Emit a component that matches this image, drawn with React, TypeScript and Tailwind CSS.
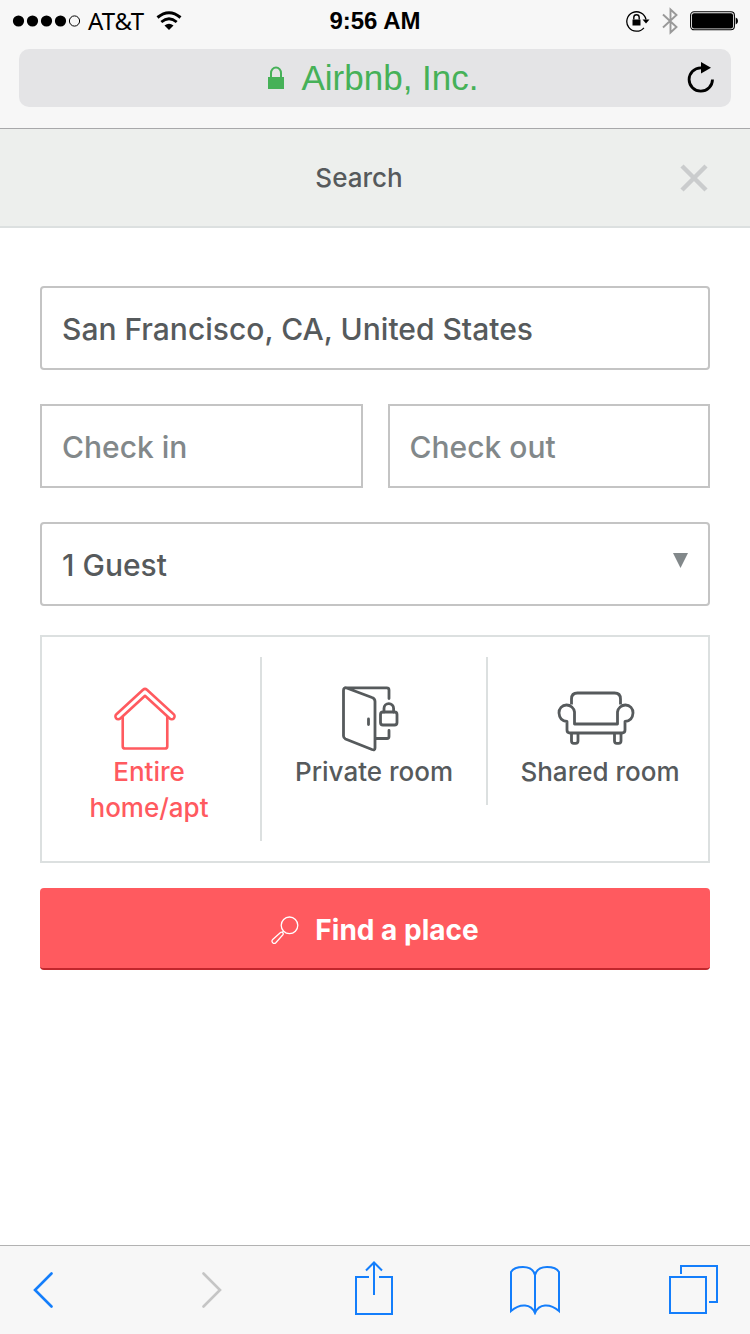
import { useState, type ReactNode } from 'react'

function StatusBar() {
  return (
    <div className="grid h-10 grid-cols-3 items-center px-3 pt-px text-black">
      <div className="flex items-center">
        <svg width="70" height="12" viewBox="0 0 70 12" aria-hidden="true">
          <circle cx="6.5" cy="6" r="5.6" />
          <circle cx="20.5" cy="6" r="5.6" />
          <circle cx="34.5" cy="6" r="5.6" />
          <circle cx="48.5" cy="6" r="5.6" />
          <circle cx="62.5" cy="6" r="5.1" fill="none" stroke="black" strokeWidth="1" />
        </svg>
        <span className="ml-1.5 font-['Noto_Sans',sans-serif] text-2xl leading-8">AT&amp;T</span>
        <svg className="ml-3" width="26" height="20" viewBox="0 0 26 20" aria-hidden="true">
          <path d="M1.5 6.5Q13 -3 24.5 6.5" fill="none" stroke="black" strokeWidth="3" />
          <path d="M5.3 11Q13 4.5 20.7 11" fill="none" stroke="black" strokeWidth="2.8" />
          <path d="M8.5 14.5Q13 10.8 17.5 14.5L13 19Z" />
        </svg>
      </div>
      <span className="text-center text-2xl leading-8 font-bold">9:56 AM</span>
      <div className="flex items-center justify-end">
        <svg width="24" height="22" viewBox="0 0 24 22" fill="none" stroke="black" aria-hidden="true">
          <path d="M17.9 17.8A9.7 9.7 0 1 1 20 9.5" strokeWidth="1.3" />
          <path d="M16.5 9.5H23.5L20 13.5Z" fill="black" stroke="none" />
          <path d="M6.5 9.5H14.5V15.5H6.5Z" fill="black" stroke="none" />
          <path d="M7.8 9.5V7.5a2.7 2.7 0 0 1 5.4 0V9.5" strokeWidth="1.4" />
        </svg>
        <svg className="ml-3" width="16" height="28" viewBox="0 0 16 28" fill="none" stroke="#999" strokeWidth="1.9" aria-hidden="true">
          <path d="M1 7.5L14.5 20L8.5 25.5V2.5L14.5 8L1 20.5" />
        </svg>
        <svg className="ml-3" width="48" height="20" viewBox="0 0 48 20" aria-hidden="true">
          <rect x="0.6" y="0.8" width="43.8" height="18" rx="3.5" fill="none" stroke="black" strokeWidth="1.1" />
          <rect x="2" y="2.2" width="41" height="15.2" rx="2" />
          <path d="M45.7 6.5Q48 7 48 10T45.7 13.5Z" />
        </svg>
      </div>
    </div>
  )
}

function AddressBar() {
  return (
    <div className="mx-[19px] mt-[9px] mb-[21px] flex h-[58px] items-center rounded-[10px] bg-[#e4e4e6] pr-3">
      <button
        type="button"
        className="flex flex-1 items-center justify-center gap-4 pl-11 text-[35px] leading-10 text-[#46b158]"
      >
        <svg width="18" height="24" viewBox="0 0 18 24" aria-hidden="true">
          <path d="M1 11H17V23H1Z" fill="currentColor" />
          <path d="M4 11V7a5 5.5 0 0 1 10 0V11" fill="none" stroke="currentColor" strokeWidth="2" />
        </svg>
        Airbnb, Inc.
      </button>
      <button type="button" aria-label="Reload" className="flex w-9 justify-center">
        <svg width="30" height="32" viewBox="0 0 30 32" aria-hidden="true">
          <path d="M26.5 17.5A11.7 11.7 0 1 1 14.8 5.8H16" fill="none" stroke="black" strokeWidth="2.8" />
          <path d="M15 0L25 5.8L15 11.6Z" />
        </svg>
      </button>
    </div>
  )
}

function HouseIcon() {
  return (
    <svg width="62" height="64" viewBox="0 0 64 66" fill="none" stroke="currentColor" strokeWidth="2.7" strokeLinejoin="round" aria-hidden="true">
      <path d="M30 2.8Q32 1 34 2.8L61.5 28A3 3 0 0 1 57.5 32.5L32 9L6.5 32.5A3 3 0 0 1 2.5 28Z" />
      <path d="M9 31V61Q9 63.5 11.5 63.5H52.5Q55 63.5 55 61V31" />
    </svg>
  )
}

function DoorIcon() {
  return (
    <svg width="58" height="66" viewBox="0 0 58 66" fill="none" stroke="currentColor" strokeWidth="2.8" strokeLinecap="round" strokeLinejoin="round" aria-hidden="true">
      <path d="M48 12.5V4Q48 1.8 45.8 1.8H5L31 11.5Q34 12.5 34 15.5V62Q34 64.5 31 63.500L4.500 53Q2.500 52 2.500 50V4.500Q2.500 1.500 5.500 1.800" />
      <path d="M35 52.500H46Q48 52.500 48 50.500V44.500M27.500 33V38.500" />
      <rect x="39.500" y="26" width="16.500" height="13" rx="2.500" />
      <path d="M43 26V22.500a4.800 4.800 0 0 1 9.600 0V26" />
    </svg>
  )
}

function SofaIcon() {
  return (
    <svg width="78" height="56" viewBox="0 0 78 56" fill="none" stroke="currentColor" strokeWidth="2.8" strokeLinejoin="round" aria-hidden="true">
      <path d="M14.500 13.500V8Q14.500 2 20.500 2H57.500Q63.500 2 63.500 8V13.500" />
      <path d="M17.500 33V21A8 8 0 0 0 9.500 14A7.500 7.500 0 0 0 2 22Q2.500 30 10 30.500V39Q10 42 13 42H65Q68 42 68 39V30.500Q75.500 30 76 22A7.500 7.500 0 0 0 68.500 14A8 8 0 0 0 60.500 21V33Z" />
      <path d="M14.500 42V50Q14.500 52.300 16.800 52.300H18.500Q21 52.300 21 50V42M57.500 42V50Q57.500 52.300 59.800 52.300H61.500Q64 52.300 64 50V42" />
    </svg>
  )
}

type RoomTypeProps = {
  value: string
  icon: ReactNode
  label: string
  selected: string
  onSelect: (value: string) => void
  className?: string
}

function RoomType({ value, icon, label, selected, onSelect, className = '' }: RoomTypeProps) {
  return (
    <label
      className={`relative flex cursor-pointer flex-col items-center pb-[15px] text-center text-[26px] leading-9 ${className} ${
        selected === value ? 'text-[#ff5a5f]' : 'text-[#565a5c]'
      }`}
    >
      <input
        type="radio"
        name="room-type"
        value={value}
        checked={selected === value}
        onChange={() => onSelect(value)}
        className="sr-only"
      />
      <span className="flex h-[97px] items-center justify-center pt-[26px] pr-2">{icon}</span>
      <span className="px-5">{label}</span>
    </label>
  )
}

function SearchForm() {
  const [roomType, setRoomType] = useState('entire')

  return (
    <form className="flex flex-col px-10 pt-[58px] pb-10" onSubmit={(e) => e.preventDefault()}>
      <div className="flex flex-col gap-[34px] text-[30px] text-[#565a5c]">
        <input
          type="text"
          aria-label="Location"
          defaultValue="San Francisco, CA, United States"
          className="h-[84px] w-full rounded border-2 border-[#c4c4c4] bg-white px-5 pt-0.5"
        />
        <div className="grid grid-cols-2 gap-[25px]">
          <input
            type="text"
            aria-label="Check in"
            placeholder="Check in"
            className="h-[84px] w-full border-2 border-[#c4c4c4] bg-white px-5 pt-0.5 placeholder:text-[#82888a]"
          />
          <input
            type="text"
            aria-label="Check out"
            placeholder="Check out"
            className="h-[84px] w-full border-2 border-[#c4c4c4] bg-white px-5 pt-0.5 placeholder:text-[#82888a]"
          />
        </div>
        <div className="relative">
          <select
            aria-label="Guests"
            className="h-[84px] w-full appearance-none rounded border-2 border-[#c4c4c4] bg-white px-5 pt-0.5"
          >
            <option>1 Guest</option>
            <option>2 Guests</option>
            <option>3 Guests</option>
          </select>
          <svg className="pointer-events-none absolute top-[31px] right-[22px]" width="15" height="15" viewBox="0 0 15 15" aria-hidden="true">
            <path d="M0 0H15L7.5 15Z" fill="#82888a" />
          </svg>
        </div>
      </div>

      <fieldset
        aria-label="Room type"
        className="mt-[29px] grid grid-cols-[220fr_226fr_220fr] items-start border-2 border-[#dce0e0] py-5"
      >
        <RoomType
          value="entire"
          icon={<HouseIcon />}
          label="Entire home/apt"
          selected={roomType}
          onSelect={setRoomType}
          className="border-r-2 border-r-[#dce0e0] pr-1"
        />
        <RoomType
          value="private"
          icon={<DoorIcon />}
          label="Private room"
          selected={roomType}
          onSelect={setRoomType}
          className="border-r-2 border-r-[#dce0e0]"
        />
        <RoomType
          value="shared"
          icon={<SofaIcon />}
          label="Shared room"
          selected={roomType}
          onSelect={setRoomType}
          className="pl-1"
        />
      </fieldset>

      <button
        type="submit"
        className="mt-[25px] flex h-[82px] items-center justify-center gap-4 rounded border-b-2 border-[#c1272d] bg-[#ff5a5f] pt-1 text-[28px] font-bold text-white"
      >
        <svg width="28" height="28" viewBox="0 0 28 28" fill="none" stroke="currentColor" strokeWidth="1.3" aria-hidden="true">
          <circle cx="18.5" cy="9.3" r="8.3" />
          <path d="M12.5 15.2L10.8 16.8M9.8 16.3L1.7 23.4A2.3 2.3 0 0 0 4.8 26.8L12 18.7Q12.6 17.5 11.8 16.7T9.8 16.3Z" />
        </svg>
        Find a place
      </button>
    </form>
  )
}

function BrowserToolbar() {
  return (
    <nav className="mt-auto flex h-[89px] items-center justify-between border-t border-[#b2b2b2] bg-[#f7f7f7] pr-[31px] pl-8 text-[#147efb]">
      <button type="button" aria-label="Back" className="w-14">
        <svg width="22" height="36" viewBox="0 0 22 36" fill="none" stroke="currentColor" strokeWidth="2.6" strokeLinecap="round">
          <path d="M19.5 1.5L3 18L19.5 34.5" />
        </svg>
      </button>
      <button type="button" aria-label="Forward" disabled className="w-11 text-[#c5c5c5]">
        <svg width="24" height="36" viewBox="0 0 24 36" fill="none" stroke="currentColor" strokeWidth="2.6" strokeLinecap="round">
          <path d="M4.5 1.5L21 18L4.5 34.5" />
        </svg>
      </button>
      <button type="button" aria-label="Share" className="w-11">
        <svg width="40" height="58" viewBox="0 0 40 58" fill="none" stroke="currentColor" strokeWidth="2">
          <path d="M15 16H2V53H38V16H25M20 34V1.5M12 9.5L20 1.5L28 9.5" />
        </svg>
      </button>
      <button type="button" aria-label="Bookmarks" className="w-[50px]">
        <svg width="52" height="50" viewBox="0 0 52 50" fill="none" stroke="currentColor" strokeWidth="2">
          <path d="M27 48V10Q25 2 15 2Q6 2 3 7V46Q10 40 17 40.5Q24 41 27 48Q30 41 37 40.5Q44 40 51 46V7Q48 2 39 2Q29 2 27 10" />
        </svg>
      </button>
      <button type="button" aria-label="Tabs" className="w-[50px]">
        <svg width="50" height="50" viewBox="0 0 50 50" fill="none" stroke="currentColor" strokeWidth="2">
          <path d="M1 12H37V48H1ZM12 9V1H48V37H40" />
        </svg>
      </button>
    </nav>
  )
}

export default function App() {
  return (
    <div className="flex min-h-screen flex-col bg-white font-['Liberation_Sans',Arial,sans-serif]">
      <div className="border-b border-[#a8a8aa] bg-[#f7f7f7]">
        <StatusBar />
        <AddressBar />
      </div>

      <main className="font-[Inter,sans-serif] font-medium">
        <header className="flex h-[99px] items-center border-b-2 border-[#dce0e0] bg-[#edefed] pr-[38px] pl-[42px]">
          <h1 className="flex-1 text-center text-[26px] leading-9 font-medium text-[#565a5c]">Search</h1>
          <button type="button" aria-label="Close" className="flex w-9 justify-center">
            <svg width="28" height="28" viewBox="0 0 28 28" fill="none" stroke="#cacccd" strokeWidth="4.5">
              <path d="M2 2L26 26M26 2L2 26" />
            </svg>
          </button>
        </header>
        <SearchForm />
      </main>

      <BrowserToolbar />
    </div>
  )
}
